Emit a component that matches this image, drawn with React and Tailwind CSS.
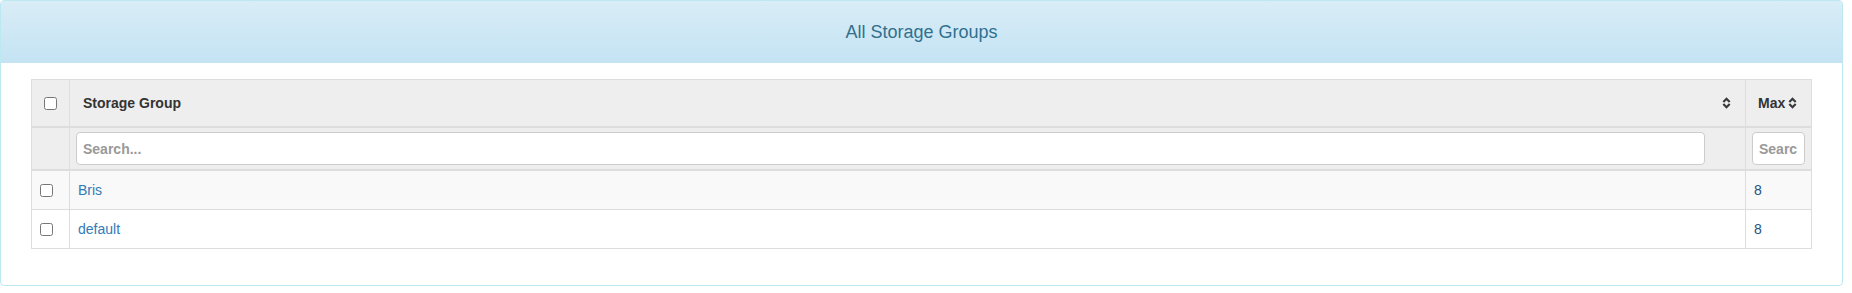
import React from "react";

function SortIcon() {
  return (
    <svg width="9" height="12" viewBox="0 0 9 12" className="shrink-0">
      <path d="M1.3 5 L4.5 1.8 L7.7 5" fill="none" stroke="#3a3a3a" strokeWidth="2.2" strokeLinejoin="miter" />
      <path d="M1.3 7 L4.5 10.2 L7.7 7" fill="none" stroke="#3a3a3a" strokeWidth="2.2" strokeLinejoin="miter" />
    </svg>
  );
}

const rows = [
  { name: "Bris", max: "8", bg: "bg-[#f9f9f9]" },
  { name: "default", max: "8", bg: "bg-white" },
];

export default function App() {
  return (
    <div className="w-[1852px] h-[293px] bg-white" style={{ fontFamily: '"Liberation Sans", Arial, sans-serif' }}>
      <div className="w-[1843px] border border-[#bce8f1] rounded-[4px] overflow-hidden bg-white">
        <div className="h-[62px] flex items-center justify-center bg-gradient-to-b from-[#d9edf7] to-[#c4e3f3]">
          <h3 className="text-[18px] text-[#31708f] leading-none">All Storage Groups</h3>
        </div>
        <div className="pt-[16px] pb-[36px] px-[30px]">
          <div className="border-t border-l border-r border-[#dddddd] text-[14px] text-[#333333]">
            {/* header row */}
            <div className="flex h-[48px] bg-[#eeeeee] border-b-2 border-[#dddddd]">
              <div className="w-[38px] shrink-0 border-r border-[#dddddd] flex items-center justify-center">
                <input type="checkbox" className="w-[13px] h-[13px] m-0" />
              </div>
              <div className="flex-1 border-r border-[#dddddd] flex items-center justify-between pl-[13px] pr-[14px]">
                <span className="font-bold">Storage Group</span>
                <SortIcon />
              </div>
              <div className="w-[65px] shrink-0 flex items-center pl-[12px] gap-[3px]">
                <span className="font-bold">Max</span>
                <SortIcon />
              </div>
            </div>
            {/* search row */}
            <div className="flex h-[43px] bg-[#eeeeee] border-b-2 border-[#dddddd]">
              <div className="w-[38px] shrink-0 border-r border-[#dddddd]" />
              <div className="flex-1 border-r border-[#dddddd] flex items-center pl-[6px] pr-[40px]">
                <input
                  type="text"
                  placeholder="Search..."
                  className="w-full h-[33px] bg-white border border-[#cccccc] rounded-[4px] px-[6px] text-[14px] font-bold placeholder:text-[#999999] outline-none"
                />
              </div>
              <div className="w-[65px] shrink-0 flex items-center px-[6px]">
                <input
                  type="text"
                  placeholder="Search..."
                  className="w-full min-w-0 h-[33px] bg-white border border-[#cccccc] rounded-[4px] px-[6px] text-[14px] font-bold placeholder:text-[#999999] outline-none"
                />
              </div>
            </div>
            {rows.map((r) => (
              <div key={r.name} className={`flex h-[39px] border-b border-[#dddddd] ${r.bg}`}>
                <div className="w-[38px] shrink-0 border-r border-[#dddddd] flex items-center pl-[8px]">
                  <input type="checkbox" className="w-[13px] h-[13px] m-0" />
                </div>
                <div className="flex-1 border-r border-[#dddddd] flex items-center pl-[8px]">
                  <a className="text-[#337ab7]">{r.name}</a>
                </div>
                <div className="w-[65px] shrink-0 flex items-center pl-[8px]">
                  <span className="text-[#23527c]">{r.max}</span>
                </div>
              </div>
            ))}
          </div>
        </div>
      </div>
    </div>
  );
}
